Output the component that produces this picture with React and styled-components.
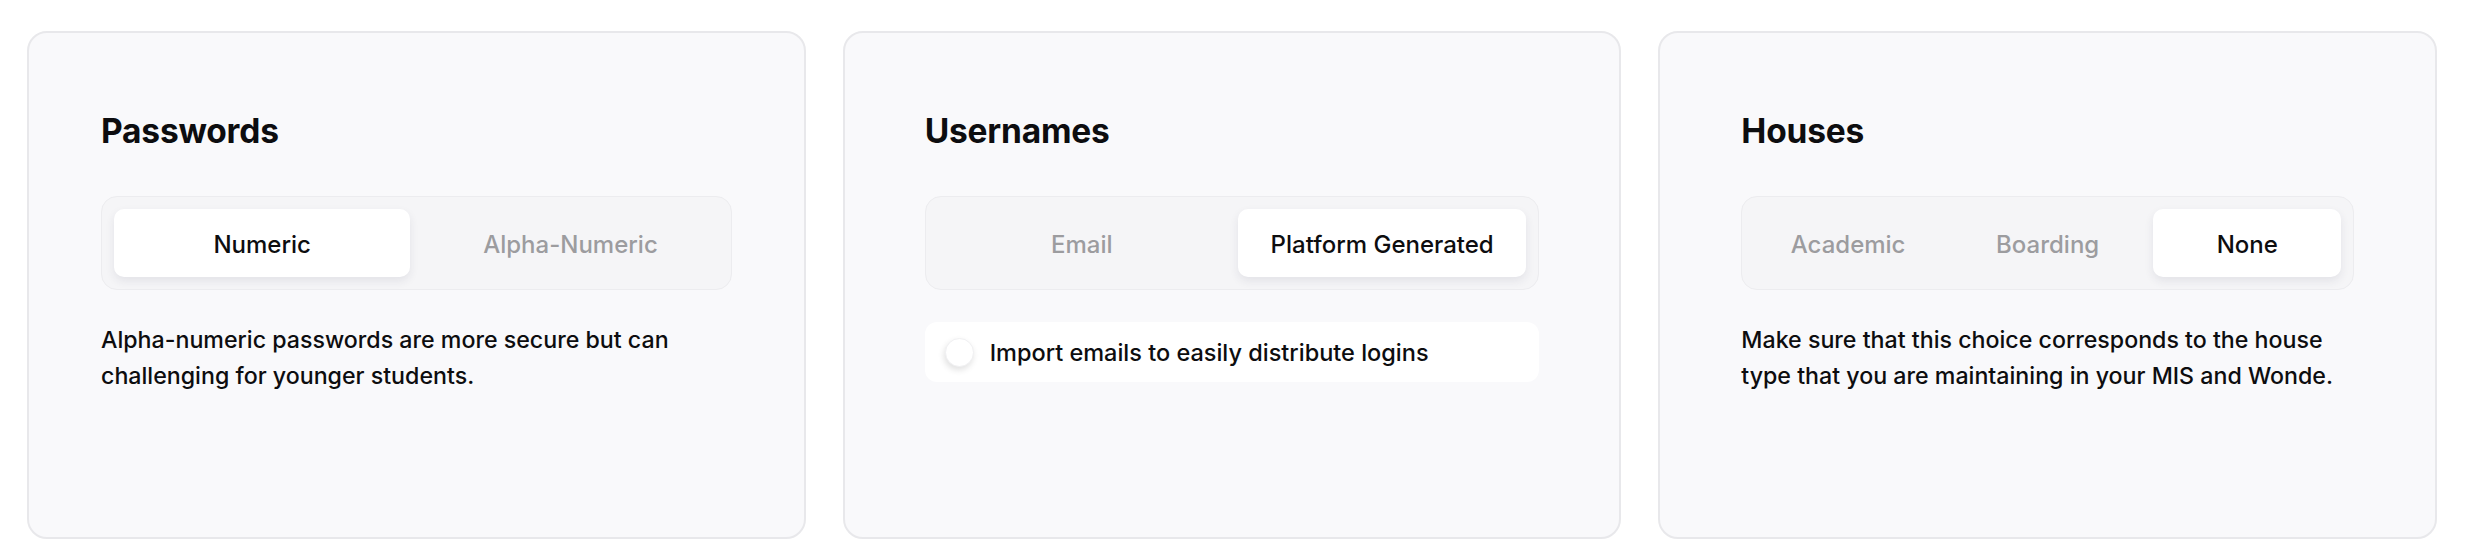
import React, { useState } from 'react';
import styled, { createGlobalStyle } from 'styled-components';

const GlobalStyle = createGlobalStyle`
  html, body {
    margin: 0;
    padding: 0;
    background: #ffffff;
  }
  body {
    font-family: Inter, 'Noto Sans', 'Liberation Sans', sans-serif;
    color: #0d0d0f;
    -webkit-font-smoothing: antialiased;
  }
`;

const Page = styled.main`
  display: grid;
  grid-template-columns: repeat(3, 1fr);
  gap: 37px;
  padding: 31px 37px 21px 27px;
  height: 560px;
  box-sizing: border-box;
`;

const Card = styled.section`
  box-sizing: border-box;
  height: 508px;
  padding: 78px ${p => p.$inset}px 0;
  background: #f9f9fb;
  border: 2px solid #e8e8eb;
  border-radius: 20px;
`;

const Title = styled.h2`
  margin: 0 0 45px;
  font-size: 33.5px;
  line-height: 40px;
  font-weight: 700;
  letter-spacing: -0.2px;
`;

const Segmented = styled.div`
  display: grid;
  grid-template-columns: repeat(${p => p.$count}, 1fr);
  gap: 12px;
  height: 94px;
  box-sizing: border-box;
  padding: 12px;
  background: #f5f5f7;
  border: 1px solid #ececef;
  border-radius: 16px;
`;

const Segment = styled.button`
  border: 0;
  border-radius: 10px;
  padding: 2px 0 0;
  font-family: inherit;
  font-size: 24px;
  font-weight: 500;
  cursor: pointer;
  background: ${p => (p.$active ? '#ffffff' : 'transparent')};
  color: ${p => (p.$active ? '#0d0d0f' : '#9c9c9f')};
  box-shadow: ${p => (p.$active ? '0 4px 10px rgba(40, 40, 80, 0.09)' : 'none')};
`;

const Description = styled.p`
  margin: 32px 0 0;
  font-size: 23.2px;
  line-height: 36px;
  font-weight: 500;
`;

const OptionRow = styled.label`
  display: flex;
  align-items: center;
  gap: 16px;
  margin-top: 32px;
  height: 60px;
  padding: 0 20px;
  background: #ffffff;
  border-radius: 12px;
  font-size: 23.5px;
  font-weight: 500;
  cursor: pointer;
`;

const Knob = styled.span`
  width: 29px;
  height: 29px;
  flex: none;
  border-radius: 50%;
  background: #ffffff;
  border: 1px solid #f0f0f2;
  box-sizing: border-box;
  box-shadow: -1px 3px 6px rgba(0, 0, 0, 0.12);
  transform: translateX(${p => (p.$on ? '14px' : '0')});
`;

const SegmentGroup = ({ options, value, onChange }) => (
  <Segmented $count={options.length}>
    {options.map(opt => (
      <Segment key={opt} $active={opt === value} onClick={() => onChange(opt)}>
        {opt}
      </Segment>
    ))}
  </Segmented>
);

const App = () => {
  const [password, setPassword] = useState('Numeric');
  const [username, setUsername] = useState('Platform Generated');
  const [house, setHouse] = useState('None');
  const [importEmails, setImportEmails] = useState(false);

  return (
    <>
      <GlobalStyle />
      <Page>
        <Card $inset={72}>
          <Title>Passwords</Title>
          <SegmentGroup options={['Numeric', 'Alpha-Numeric']} value={password} onChange={setPassword} />
          <Description>
            Alpha-numeric passwords are more secure but can challenging for younger students.
          </Description>
        </Card>

        <Card $inset={80}>
          <Title>Usernames</Title>
          <SegmentGroup options={['Email', 'Platform Generated']} value={username} onChange={setUsername} />
          <OptionRow onClick={() => setImportEmails(v => !v)}>
            <Knob $on={importEmails} />
            Import emails to easily distribute logins
          </OptionRow>
        </Card>

        <Card $inset={81}>
          <Title>Houses</Title>
          <SegmentGroup options={['Academic', 'Boarding', 'None']} value={house} onChange={setHouse} />
          <Description>
            Make sure that this choice corresponds to the house type that you are maintaining in your MIS and
            Wonde.
          </Description>
        </Card>
      </Page>
    </>
  );
};

export default App;
